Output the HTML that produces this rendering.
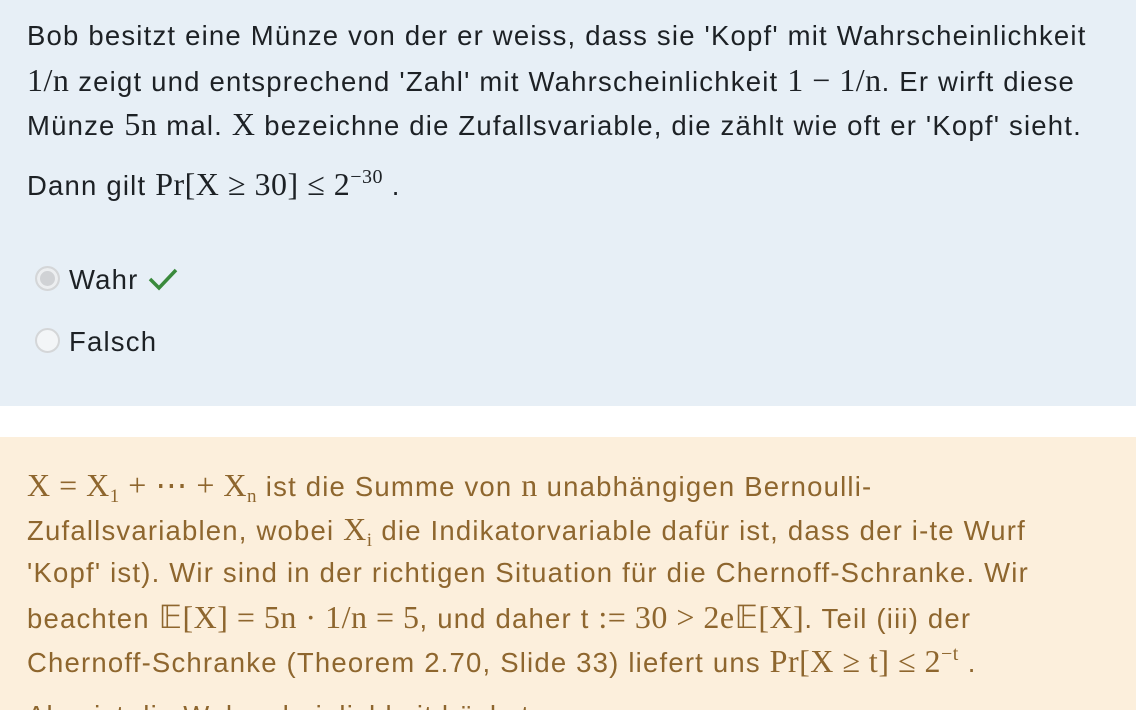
<!DOCTYPE html>
<html><head><meta charset="utf-8"><style>
html,body{margin:0;padding:0;width:1136px;height:710px;overflow:hidden;background:#fff;font-family:"Liberation Sans",sans-serif;}
.top{position:absolute;left:0;top:0;width:1136px;height:406px;background:#e7eff6;color:#1d2125;}
.bot{position:absolute;left:0;top:437px;width:1136px;height:273px;background:#fcefdc;color:#8e662e;overflow:hidden;}
.l{position:absolute;left:27px;font-size:27.5px;letter-spacing:1.2px;white-space:nowrap;line-height:30px;}
.m{font-family:"Liberation Serif",serif;font-size:32px;letter-spacing:0.5px;}
sup{font-size:20px;vertical-align:12px;line-height:0}
sub{font-size:19px;vertical-align:-6px;line-height:0}
.radio{position:absolute;left:35px;width:25px;height:25px;border-radius:50%;border:2px solid #d4d6d8;background:#f3f5f7;box-sizing:border-box;}
</style></head><body>
<div class="top">
<div class="l" style="top:21px">Bob besitzt eine Münze von der er weiss, dass sie 'Kopf' mit Wahrscheinlichkeit</div>
<div class="l" style="top:65px"><span class="m">1/n</span> zeigt und entsprechend 'Zahl' mit Wahrscheinlichkeit <span class="m">1 − 1/n</span>. Er wirft diese</div>
<div class="l" style="top:109px">Münze <span class="m">5n</span> mal. <span class="m">X</span> bezeichne die Zufallsvariable, die zählt wie oft er 'Kopf' sieht.</div>
<div class="l" style="top:169px">Dann gilt <span class="m">Pr[X ≥ 30] ≤ 2<sup>−30</sup></span> .</div>
<div class="radio" style="top:266px;background:#d0d2d5;box-shadow:inset 0 0 0 3px #eceef0"></div>
<div class="l" style="top:265px;left:69px">Wahr <svg width="32" height="26" viewBox="0 0 32 26" style="vertical-align:-3px"><path d="M3 13 L12 22 L29 4" fill="none" stroke="#3a8a3c" stroke-width="3.5"/></svg></div>
<div class="radio" style="top:328px"></div>
<div class="l" style="top:327px;left:69px">Falsch</div>
</div>
<div class="bot">
<div class="l" style="top:33px"><span class="m">X = X<sub>1</sub> + ⋯ + X<sub>n</sub></span> ist die Summe von <span class="m">n</span> unabhängigen Bernoulli-</div>
<div class="l" style="top:77px">Zufallsvariablen, wobei <span class="m">X<sub>i</sub></span> die Indikatorvariable dafür ist, dass der i-te Wurf</div>
<div class="l" style="top:121px">'Kopf' ist). Wir sind in der richtigen Situation für die Chernoff-Schranke. Wir</div>
<div class="l" style="top:165px">beachten <span class="m">𝔼[X] = 5n · 1/n = 5</span>, und daher t <span class="m">:= 30 &gt; 2e𝔼[X]</span>. Teil (iii) der</div>
<div class="l" style="top:209px">Chernoff-Schranke (Theorem 2.70, Slide 33) liefert uns <span class="m">Pr[X ≥ t] ≤ 2<sup>−t</sup></span> .</div>
<div class="l" style="top:264px">Also ist die Wahrscheinlichkeit höchstens</div>
</div>
</body></html>
